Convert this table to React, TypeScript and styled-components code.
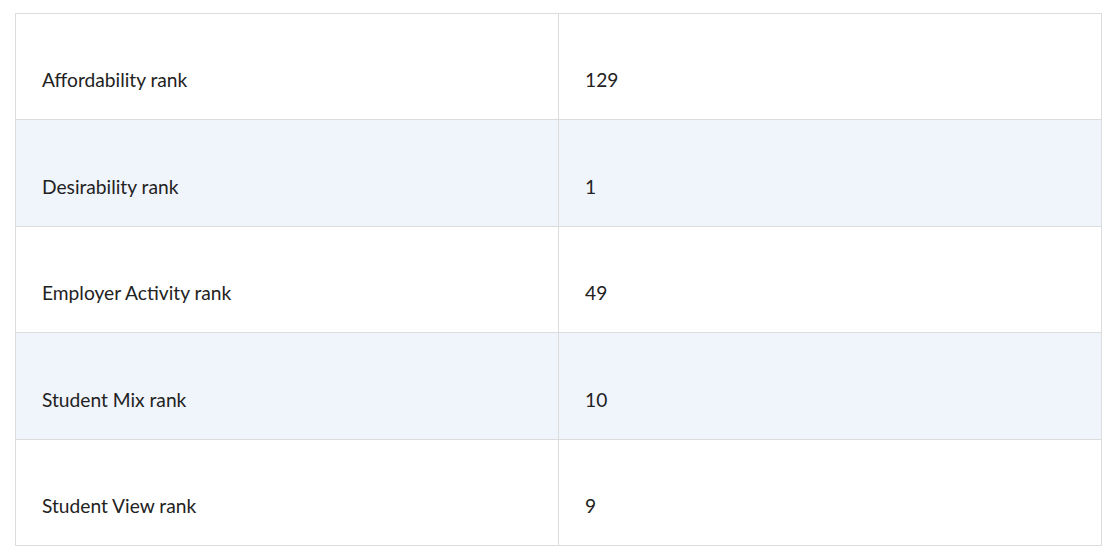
import React from 'react';
import styled, { createGlobalStyle } from 'styled-components';

const GlobalStyle = createGlobalStyle`
  body {
    margin: 0;
    background: #ffffff;
    font-family: Lato, "Liberation Sans", sans-serif;
  }
`;

const Page = styled.div`
  padding: 13px 15px;
`;

const RankTable = styled.table`
  width: 1087px;
  border-collapse: collapse;
  table-layout: fixed;
  border: 1px solid #dcdcdc;
`;

const Row = styled.tr<{ $striped: boolean; $tall: boolean }>`
  background-color: ${({ $striped }) => ($striped ? '#f0f4fb' : '#ffffff')};
  height: ${({ $tall }) => ($tall ? '107px' : '106px')};
`;

const Cell = styled.td`
  width: 50%;
  border: 1px solid #dcdcdc;
  padding: 52px 26px 26px;
  font-size: 19.2px;
  line-height: 27px;
  color: #222;
  vertical-align: middle;
`;

const ranks = [
  { label: 'Affordability rank', value: '129' },
  { label: 'Desirability rank', value: '1' },
  { label: 'Employer Activity rank', value: '49' },
  { label: 'Student Mix rank', value: '10' },
  { label: 'Student View rank', value: '9' },
];

export default function App() {
  return (
    <>
      <GlobalStyle />
      <Page>
        <RankTable>
          <tbody>
            {ranks.map((r, i) => (
              <Row key={r.label} $striped={i % 2 === 1} $tall={i % 2 === 1}>
                <Cell>{r.label}</Cell>
                <Cell>{r.value}</Cell>
              </Row>
            ))}
          </tbody>
        </RankTable>
      </Page>
    </>
  );
}
